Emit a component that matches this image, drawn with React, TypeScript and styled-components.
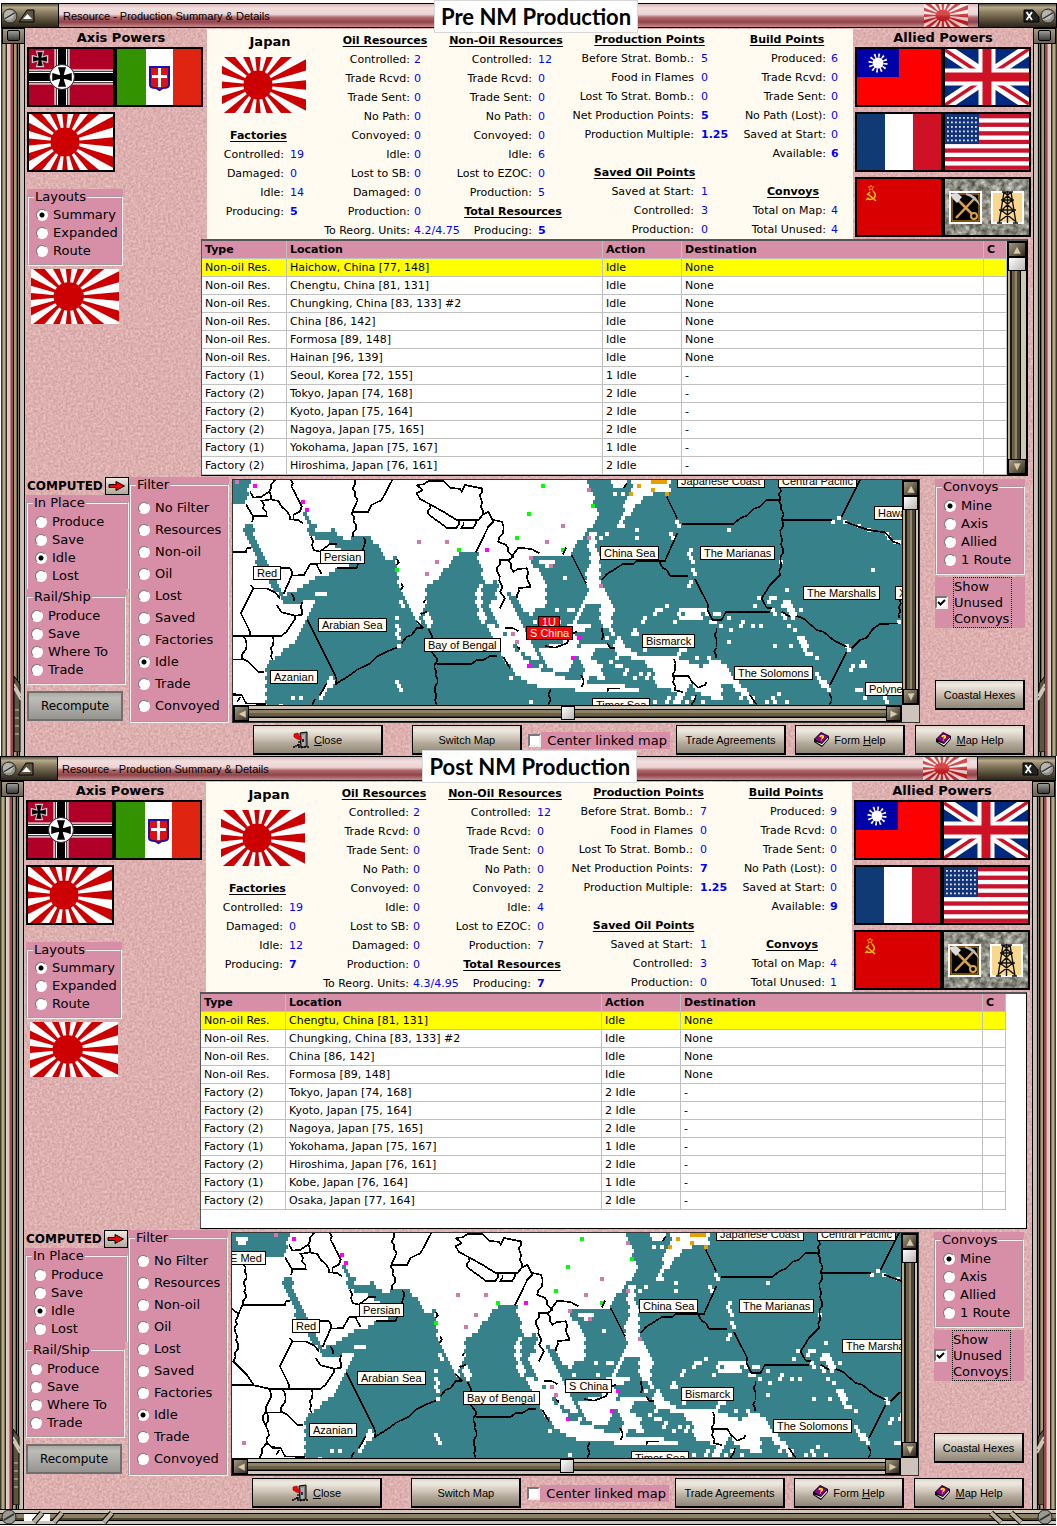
import React from "react";
import styled, { createGlobalStyle, css } from "styled-components";

const VERDANA = `Verdana, "DejaVu Sans", sans-serif`;
const ARIAL = `"Liberation Sans", Arial, sans-serif`;

const Global = createGlobalStyle`
  *, *::before, *::after { box-sizing: border-box; }
  body { margin: 0; background: #fff; color: #000; font-family: ${VERDANA}; font-size: 11px; }
`;

/* ---------- shared colours ---------- */
const ROSE = "#d78fa8";
const CREAM = "#fffbf0";
const METAL_TILE = "linear-gradient(135deg, #a59a7e, #6d6350 50%, #2f2a1f)";

/* ---------- page shell ---------- */
const Page = styled.main`
  padding-top: 3px;
`;
const Win = styled.section<{ $shift?: boolean }>`
  position: relative;
  margin: ${(p) => (p.$shift ? "0 1px 0 0" : "0 0 0 1px")};
`;
const Banner = styled.h1<{ $wide?: boolean }>`
  position: absolute;
  top: ${(p) => (p.$wide ? -6 : -3)}px;
  left: 41%;
  z-index: 3;
  margin: 0;
  padding: 0 6px;
  border: 1px solid #d8d8d8;
  background: #fff;
  font: 700 22px/31px Lato, sans-serif;
  white-space: nowrap;
  ${(p) => p.$wide && css`left: 40%;`}
`;
const TitleBar = styled.header`
  display: flex;
  align-items: stretch;
  height: 25px;
  border-top: 1px solid #000;
  border-bottom: 1px solid #000;
  background: linear-gradient(#d9b8b8, #f2dfdf 18%, #ecd3d3 45%, #b0696d 58%, #8f444a 78%, #c98a8c);
`;
const TitleText = styled.div`
  flex: 1;
  padding-left: 4px;
  font: 11px/24px ${ARIAL};
`;
const Cap = styled.div<{ $w: number; $end?: boolean }>`
  display: flex;
  align-items: center;
  gap: 0;
  justify-content: ${(p) => (p.$end ? "flex-end" : "flex-start")};
  width: ${(p) => p.$w}px;
  border: solid #000;
  border-width: 0 1px;
  background: linear-gradient(#5a523c, #b5a98a 15%, #8d8064 35%, #5f543e 65%, #2b261b);
`;
const CapButton = styled.button`
  width: 17px;
  height: 14px;
  padding: 0;
  border: 0;
  background: none;
  svg { display: block; }
`;
const TitleFlag = styled.div`
  width: 44px;
  margin-right: 10px;
  opacity: 0.65;
`;
const Frame = styled.div`
  display: flex;
`;
const Rail = styled.div<{ $right?: boolean }>`
  position: relative;
  flex: none;
  width: ${(p) => (p.$right ? 24 : 25)}px;
  background: linear-gradient(
    ${(p) => (p.$right ? "270deg" : "90deg")},
    #3a3828 0 1px, #7d7455 1px 2px, #b3a988 2px 4px, #7d7455 4px 5px, #2c281c 5px 6px,
    #d8cfc6 6px 7px, #e6c4c4 7px 9px, #c07c80 9px 10px, #93494f 10px 12px, #111 12px 13px,
    #a69b76 13px 15px, #6f6648 15px 16px, #000 16px 17px, #7d7455 17px 18px, #000 18px 19px,
    #b8afa0 19px 20px, #cbc2b5 20px 23px, #000 23px 24px, #d9b5b5 24px
  );
`;
const Clamp = styled.div<{ $right?: boolean }>`
  position: absolute;
  top: 0;
  ${(p) => (p.$right ? "left: 0;" : "right: 1px;")}
  width: 23px;
  height: 16px;
  padding: 1px 4px;
  border: 1px solid #000;
  background: linear-gradient(#a79a7c, #6d6350);
  &::before {
    content: "";
    display: block;
    width: 13px;
    height: 11px;
    border: 1px solid #000;
    border-radius: 2px;
    background: linear-gradient(#9c9c98, #3c3c3c);
  }
`;
const RailFoot = styled.svg<{ $right?: boolean }>`
  position: absolute;
  bottom: 4px;
  ${(p) => (p.$right ? "left: 4px; transform: scaleX(-1);" : "right: 4px;")}
`;
const Content = styled.div`
  position: relative;
  flex: 1;
  min-width: 0;
  padding-bottom: 1px;
  overflow: hidden;
`;
const Texture = styled.svg`
  position: absolute;
  inset: 0;
  width: 100%;
  height: 100%;
`;
const Layer = styled.div`
  position: relative;
`;
const BottomBar = styled.footer`
  display: flex;
  align-items: center;
  justify-content: space-between;
  height: 16px;
  padding-right: 1px;
  border-top: 1px solid #000;
  background: linear-gradient(#cfc6b6 0 3px, #000 3px 4px, #8d8264 4px 8px, #4b4330 8px 10px, #000 10px 11px, #cfc6b6 11px 14px, #000 14px);
`;
const Chevrons = styled.svg`
  display: block;
`;

/* ---------- upper area ---------- */
const Upper = styled.div`
  display: flex;
  height: 447px;
`;
const LeftCol = styled.aside`
  flex: none;
  width: 175px;
  padding-left: 1px;
`;
const MainCol = styled.div`
  flex: 1;
  min-width: 0;
`;
const TopRow = styled.div`
  display: flex;
  height: 211px;
  padding: 1px 0 0 6px;
`;
const PowersTitle = styled.h2`
  width: 176px;
  margin: 0;
  padding-left: 12px;
  text-align: center;
  font: bold 13px/19px ${VERDANA};
`;
const Powers = styled.div`
  flex: none;
  width: 180px;
  padding-left: 2px;
  margin-top: -1px;
  ${PowersTitle} { padding-left: 0; }
`;
const FlagGrid = styled.div`
  display: grid;
  grid-template-columns: 88px 88px;
  gap: 5px 0;
`;
const FlagButton = styled.button`
  display: block;
  width: 88px;
  height: 60px;
  padding: 0;
  border: 2px solid #000;
  background: #fff;
  svg { display: block; width: 100%; height: 100%; }
`;
const PlainFlag = styled.div<{ $w: number; $h: number }>`
  width: ${(p) => p.$w}px;
  height: ${(p) => p.$h}px;
`;
const LayoutsBox = styled.div`
  width: 96px;
  margin-top: 17px;
`;
const FlagBelow = styled.div`
  padding: 3px 0 0 4px;
`;

/* ---------- stats ---------- */
const Stats = styled.div`
  display: flex;
  flex: 1;
  min-width: 0;
  padding-top: 1px;
  background: ${CREAM};
`;
const StatCol = styled.div<{ $w: number; $low?: boolean }>`
  flex: ${(p) => p.$w} 1 0;
  min-width: 0;
  padding-top: ${(p) => (p.$low ? 1 : 0)}px;
`;
const StatHead = styled.h3<{ $l?: number; $r?: number }>`
  margin: 0;
  padding: 0 ${(p) => p.$r || 0}px 0 ${(p) => p.$l || 0}px;
  font: bold 11px/19px ${VERDANA};
  text-align: center;
  text-decoration: underline;
  text-underline-offset: 2px;
  white-space: nowrap;
`;
const StatRow = styled.div<{ $a: number; $b: number; $gap: number }>`
  display: grid;
  grid-template-columns: ${(p) => p.$a}fr ${(p) => p.$b}fr;
  column-gap: ${(p) => p.$gap}px;
  height: 19px;
  line-height: 19px;
  white-space: nowrap;
`;
const StatLabel = styled.span`
  display: flex;
  justify-content: flex-end;
  min-width: 0;
`;
const StatValue = styled.output<{ $bold?: boolean }>`
  min-width: 0;
  color: #00f;
  font-weight: ${(p) => (p.$bold ? "bold" : "normal")};
`;
const Nation = styled.div`
  height: 95px;
  padding-left: 15px;
`;
const NationName = styled.h3`
  width: 96px;
  margin: 0 0 4px;
  font: bold 13px/22px ${VERDANA};
  text-align: center;
`;

/* ---------- table ---------- */
const TablePanel = styled.div`
  display: flex;
  min-height: 237px;
  margin-right: 5px;
  border: 1px solid #555;
  border-top-width: 2px;
  border-right-color: #000;
  border-bottom-color: #000;
  background: #fff;
`;
const Grid = styled.table`
  flex: 1;
  width: 100%;
  table-layout: fixed;
  border-collapse: separate;
  border-spacing: 0;
  align-self: flex-start;
  th, td {
    height: 18px;
    padding: 1px 2px 0 3px;
    border-right: 1px solid #c0c0c0;
    border-bottom: 1px solid #c0c0c0;
    font-size: 11px;
    line-height: 16px;
    text-align: left;
    white-space: nowrap;
    overflow: hidden;
  }
  th { background: ${ROSE}; }
  tbody tr:first-child td { background: #ff0; }
`;
const Spacer = styled.div`
  width: 20px;
`;

/* ---------- scroll bars ---------- */
const VBar = styled.div<{ $w: number }>`
  display: flex;
  flex-direction: column;
  align-items: stretch;
  flex: none;
  width: ${(p) => p.$w}px;
  border: 1px solid #000;
  background: linear-gradient(90deg, #b8ae98 0 2px, #1a1810 2px 4px, #6b614a 4px 7px, #93876a 7px 9px, #4b4330 9px 12px, #000 12px 13px, #cfc6b6 13px);
`;
const HBar = styled.div`
  display: flex;
  height: 17px;
  border: 1px solid #000;
  background: linear-gradient(#cfc6b6 0 3px, #000 3px 4px, #8d8264 4px 7px, #6b5f46 7px 10px, #3a3426 10px 11px, #000 11px 12px, #cfc6b6 12px);
`;
const Arrow = styled.button`
  flex: none;
  min-width: 15px;
  height: 15px;
  padding: 0;
  border: 1px solid #000;
  background: ${METAL_TILE};
  svg { display: block; margin: auto; }
`;
const Thumb = styled.div`
  flex: none;
  min-width: 14px;
  height: 14px;
  border: 1px solid #000;
  background: linear-gradient(135deg, #fff, #b9b4ae);
`;
const Track = styled.div`
  flex: 1;
`;

/* ---------- lower area ---------- */
const Lower = styled.div`
  display: flex;
  height: 280px;
`;
const Controls = styled.div`
  display: flex;
  flex: none;
  width: 206px;
  padding-top: 2px;
`;
const Modes = styled.div`
  width: 103px;
`;
const Computed = styled.div`
  display: flex;
  align-items: center;
  justify-content: space-between;
  height: 18px;
  padding-left: 1px;
  font: bold 12px/18px ${VERDANA};
`;
const SmallButton = styled.button`
  width: 24px;
  height: 18px;
  padding: 0;
  border: 1px solid #000;
  background: linear-gradient(#ece8e2, #b0a99c);
  svg { display: block; margin: auto; }
`;
const GroupWrap = styled.div<{ $w?: string; $h?: number }>`
  width: ${(p) => p.$w || "100%"};
  height: ${(p) => (p.$h ? p.$h + "px" : "auto")};
  overflow: hidden;
  background: ${ROSE};
`;
const Fieldset = styled.fieldset<{ $pad: number; $top: number }>`
  min-width: 0;
  margin: 0;
  padding: ${(p) => p.$top}px 0 4px ${(p) => p.$pad}px;
  border: 2px groove #f4f0f2;
  legend {
    margin-left: ${(p) => -p.$pad + 5}px;
    padding: 0 1px;
    font-size: 13px;
    line-height: 16px;
  }
`;
const RadioRow = styled.label<{ $h: number }>`
  display: flex;
  align-items: center;
  gap: 5px;
  height: ${(p) => p.$h}px;
  font-size: 13px;
  line-height: 16px;
  white-space: nowrap;
`;
const Radio = styled.input`
  appearance: none;
  flex: none;
  width: 12px;
  height: 12px;
  margin: 0;
  border: 1px solid;
  border-color: #777 #fff #fff #777;
  border-radius: 50%;
  background: #fff;
  &:checked { background: radial-gradient(circle, #000 0 2px, #fff 3px); }
`;
const Check = styled.input`
  appearance: none;
  flex: none;
  width: 13px;
  height: 13px;
  margin: 0;
  border: 2px solid;
  border-color: #777 #eee #eee #777;
  background: #fff;
`;
const CheckBox = styled.span`
  position: relative;
  display: flex;
  svg { position: absolute; inset: 2px; pointer-events: none; opacity: 0; }
  ${Check}:checked + svg { opacity: 1; }
`;
const PushButton = styled.button<{ $w?: number; $gray?: boolean }>`
  display: flex;
  align-items: center;
  justify-content: center;
  gap: 4px;
  width: ${(p) => (p.$w ? p.$w + "px" : "100%")};
  height: 30px;
  padding: 0;
  border: 1px solid #000;
  border-right-width: 2px;
  border-bottom-width: 2px;
  background: linear-gradient(#ddd6cb, #efe9df 15%, #cfc6b9 45%, #b3a999 65%, #8f8778);
  color: #000;
  font: 11px/14px ${ARIAL};
  white-space: nowrap;
  ${(p) =>
    p.$gray &&
    css`
      border: 2px solid #6f6f6f;
      background: linear-gradient(#aaa89f, #bdbdb8 20%, #a9a8a4 60%, #96948f);
      font: 12px/14px ${VERDANA};
    `}
`;
const RecomputeSlot = styled.div`
  padding: 6px 0 0 1px;
`;
const Right = styled.div`
  flex: 1;
  min-width: 0;
  padding-top: 4px;
`;
const MapRow = styled.div`
  display: flex;
`;
const MapPanel = styled.div`
  flex: 1;
  min-width: 0;
  border: 1px solid #333;
`;
const MapTop = styled.div`
  display: flex;
`;
const MapView = styled.div`
  position: relative;
  flex: 1;
  min-width: 0;
  height: 225px;
  overflow: hidden;
  background: #fff;
  > svg { display: block; width: 100%; height: 225px; }
`;
const MapLabel = styled.span<{ $hot?: boolean }>`
  position: absolute;
  height: 14px;
  padding: 0 3px;
  border: 1px solid #000;
  background: ${(p) => (p.$hot ? "#f00" : CREAM)};
  color: ${(p) => (p.$hot ? "#fff" : "#000")};
  font: 11px/12px ${ARIAL};
  white-space: nowrap;
`;
const MapFoot = styled.div`
  display: flex;
`;
const HBarWrap = styled.div`
  flex: 1;
`;
const Corner = styled.div`
  width: 17px;
  background: #cdc3bb;
`;
const Side = styled.div`
  flex: none;
  width: 113px;
  padding: 0 8px 0 15px;
`;
const ShowUnused = styled.label`
  display: flex;
  align-items: center;
  gap: 5px;
  margin: 2px 0 52px;
  background: ${ROSE};
  font-size: 13px;
  line-height: 16px;
  > span:last-child { width: 59px; height: 51px; padding-top: 1px; border: 1px dotted #000; }
`;
const ButtonRow = styled.div`
  display: flex;
  align-items: center;
  padding: 2px 8px 0 21px;
`;
const ButtonGroup = styled.div<{ $gap: number }>`
  display: flex;
  align-items: center;
  gap: ${(p) => p.$gap}px;
  margin-left: auto;
  & + & { margin-left: 9px; }
`;
const LinkCheck = styled.label`
  display: flex;
  align-items: center;
  font-size: 13px;
  line-height: 17px;
  white-space: nowrap;
  > span:last-child { padding: 0 3px 0 6px; background: ${ROSE}; }
`;

/* ---------- flags ---------- */
const RisingSun = () => {
  const rays = Array.from({ length: 16 }, (_, i) => {
    const a = ((i * 22.5 - 5.6) * Math.PI) / 180;
    const b = ((i * 22.5 + 5.6) * Math.PI) / 180;
    return `M36 28L${36 + 90 * Math.cos(a)} ${28 + 90 * Math.sin(a)}L${36 + 90 * Math.cos(b)} ${28 + 90 * Math.sin(b)}z`;
  }).join("");
  return (
    <svg viewBox="0 0 84 56" width="100%" height="100%" preserveAspectRatio="none" style={{ display: "block" }}>
      <rect width="84" height="56" fill="#fff" />
      <path d={rays} fill="#c00" />
      <circle cx="36" cy="28" r="14.500" fill="#c00" />
    </svg>
  );
};
const CROSS = "M-3-9H3Q1-3 1-1Q3-1 9-3V3Q3 1 1 1Q1 3 3 9H-3Q-1 3-1 1Q-3 1-9 3V-3Q-3-1-1-1Q-1-3-3-9z";
const Germany = () => (
  <svg viewBox="0 0 84 56" preserveAspectRatio="none">
    <rect width="84" height="56" fill="#b00028" />
    <path d="M33 0V56M0 28H84" stroke="#fff" strokeWidth="15" />
    <path d="M33 0V56M0 28H84" stroke="#000" strokeWidth="12.5" />
    <path d="M33 0V56M0 28H84" stroke="#fff" strokeWidth="10.5" />
    <path d="M33 0V56M0 28H84" stroke="#000" strokeWidth="8" />
    <circle cx="33" cy="28" r="12.5" fill="#fff" stroke="#222" />
    <path d={CROSS} transform="translate(33 28)" fill="#000" stroke="#000" strokeWidth="1.500" />
    <path d={CROSS} transform="translate(11 10) scale(.75)" fill="#000" stroke="#ccc" strokeWidth="4" />
    <path d={CROSS} transform="translate(11 10) scale(.7)" fill="#000" stroke="#000" strokeWidth="1.500" />
  </svg>
);
const Italy = () => (
  <svg viewBox="0 0 84 56" preserveAspectRatio="none">
    <rect width="84" height="56" fill="#fff" />
    <rect width="29" height="56" fill="#339200" />
    <rect x="56" width="28" height="56" fill="#df2512" />
    <path d="M33 18H52V36Q52 39 46 39L42.500 41L39 39Q33 39 33 36z" fill="#d11" stroke="#1a10b0" strokeWidth="2" />
    <path d="M42.500 19V38M35 27.500H50" stroke="#fff" strokeWidth="3" />
  </svg>
);
const China = () => (
  <svg viewBox="0 0 84 56" preserveAspectRatio="none">
    <rect width="84" height="56" fill="#f00" />
    <rect width="42" height="28" fill="#0000a8" />
    <circle cx="21" cy="14" r="7.500" fill="none" stroke="#fff" strokeWidth="4" strokeDasharray="1.600 2.330" />
    <circle cx="21" cy="14" r="5.500" fill="#fff" />
  </svg>
);
const Britain = () => (
  <svg viewBox="0 0 84 56" preserveAspectRatio="none">
    <rect width="84" height="56" fill="#002a80" />
    <path d="M0 0L84 56M84 0L0 56" stroke="#fff" strokeWidth="12" />
    <path d="M0 1L42 29M84 0L42 28M42 28L84 55M42 28L0 56" stroke="#cf1126" strokeWidth="3.500" />
    <path d="M42 0V56M0 28H84" stroke="#fff" strokeWidth="17" />
    <path d="M42 0V56M0 28H84" stroke="#cf1126" strokeWidth="9" />
  </svg>
);
const France = () => (
  <svg viewBox="0 0 84 56" preserveAspectRatio="none">
    <rect width="84" height="56" fill="#fff" />
    <rect width="28" height="56" fill="#0f3a73" />
    <rect x="56" width="28" height="56" fill="#cf1126" />
  </svg>
);
const USA = () => (
  <svg viewBox="0 0 84 56" preserveAspectRatio="none">
    <rect width="84" height="56" fill="#fff" />
    {Array.from({ length: 7 }, (_, i) => (
      <rect key={i} y={i * 8.6} width="84" height="4.300" fill="#c8142e" />
    ))}
    <rect width="34" height="30" fill="#14347a" />
    {Array.from({ length: 48 }, (_, i) => (
      <rect key={i} x={2 + (i % 8) * 4} y={3 + Math.floor(i / 8) * 4.5} width="1.800" height="1.800" fill="#dfe6f5" />
    ))}
  </svg>
);
const Soviet = () => (
  <svg viewBox="0 0 84 56" preserveAspectRatio="none">
    <rect width="84" height="56" fill="#d80000" />
    <path d="M14 6l.8 2h2l-1.600 1.300.6 2-1.800-1.200-1.800 1.200.6-2L11.200 8h2z" fill="none" stroke="#f7a500" strokeWidth=".8" />
    <path d="M16 12Q20 16 17 19Q13 22 10 19M9 21L12 19M11 15L19 22M10 16L13 13" fill="none" stroke="#fc0" strokeWidth="1.400" />
  </svg>
);
const Resources = ({ uid }: { uid: string }) => (
  <svg viewBox="0 0 84 56" preserveAspectRatio="none">
    <filter id={`stone-${uid}`} x="0" y="0" width="100%" height="100%" colorInterpolationFilters="sRGB">
      <feTurbulence type="fractalNoise" baseFrequency=".16" numOctaves="3" />
      <feColorMatrix values=".9 0 0 0 .1  .9 0 0 0 .1  .9 0 0 0 .06  0 0 0 0 1" />
    </filter>
    <rect width="84" height="56" filter={`url(#stone-${uid})`} />
    <rect x="5" y="13" width="31" height="31" fill="#000" stroke="#fff" strokeWidth="2" />
    <rect x="7" y="15" width="27" height="27" fill="none" stroke="#f0a010" />
    <path d="M11 39L30 19M12 20L27 35" stroke="#d9a050" strokeWidth="2.500" />
    <path d="M5 15L12 14L17 18L12 24L8 20z" fill="#ddd" />
    <path d="M21 14Q32 15 35 27Q29 19 21 16z" fill="#bbb" />
    <circle cx="29" cy="37" r="3" fill="none" stroke="#d9a050" strokeWidth="2" />
    <rect x="47" y="13" width="31" height="31" fill="#f9d88e" stroke="#fff" strokeWidth="2" />
    <path d="M59 13L54 44M66 13L71 44M57 13H68M56 21H69M54 31H71M58 21L68 31M67 21L57 31M56 31L70 42M69 31L55 42M59 13L67 21M66 13L58 21M62.500 12V44M52 44H57M68 44H73" stroke="#111" strokeWidth="1.400" fill="none" />
  </svg>
);

/* ---------- small icons ---------- */
const Tri = ({ dir }: { dir: "up" | "down" | "left" | "right" }) => {
  const d = { up: "M5 1L9 9H1z", down: "M5 9L1 1H9z", left: "M1 5L9 1V9z", right: "M9 5L1 9V1z" }[dir];
  return (
    <svg width="10" height="10" viewBox="0 0 10 10">
      <path d={d} fill="#d8ccb0" stroke="#6a6048" strokeWidth=".6" />
    </svg>
  );
};
const Screw = () => (
  <svg width="16" height="16" viewBox="0 0 16 16" style={{ display: "block", flex: "none" }}>
    <circle cx="8" cy="8" r="7" fill="#8e8e86" stroke="#26251f" />
    <circle cx="7" cy="7" r="5" fill="#b5b5ae" />
    <path d="M3 11L13 5" stroke="#333" strokeWidth="2" />
    <path d="M3 12L13 6" stroke="#e5e5e0" strokeWidth=".8" />
  </svg>
);
const DoorIcon = () => (
  <svg width="17" height="18" viewBox="0 0 17 18">
    <path d="M7 2L14 1V15L8 17z" fill="#7b7f84" stroke="#000" />
    <path d="M9 4L12 3V14L9 16z" fill="#a9aeb3" />
    <path d="M10 8V11" stroke="#000" strokeWidth="1.500" />
    <path d="M1 3L5 2L6 5L8 6V9L4 8L1 6z" fill="#f00" stroke="#700" strokeWidth=".6" />
    <path d="M0 16H3V14H5V16H16M6 10V15" stroke="#000" strokeWidth="1.300" strokeDasharray="2 1" fill="none" />
  </svg>
);
const BookIcon = () => (
  <svg width="17" height="17" viewBox="0 0 17 17">
    <path d="M1 11L9 16L16 8V5L8 1L1 8z" fill="#000" />
    <path d="M2 10.500L9 14.500L15 8V6.500L9 13z" fill="#fff" />
    <path d="M2 8L8 2L15 5.500L9 12z" fill="#900090" />
    <path d="M7 6Q8 4 10 5Q11 6.500 8.500 7.500M8 9L8.600 9.300" stroke="#ff0" strokeWidth="1.500" fill="none" />
  </svg>
);
const RedArrow = () => (
  <svg width="18" height="12" viewBox="0 0 18 12">
    <path d="M1 4.500H8V1.500L16.500 6L8 10.500V7.500H1z" fill="#f00" stroke="#000" />
  </svg>
);

/* ---------- map ---------- */
type P = [number, number];
const pts = (s: string): P[] => s.trim().split(/\s+/).map((v) => v.split(",").map(Number) as P);
const east = (s: string) => pts(s).map(([x, y]) => [x + 1020, y] as P);

const SEA: P[][] = [
  pts(`150,365 190,352 230,330 250,312 290,300 320,282 400,262 320,215 300,200 262,195 240,180 228,140 218,108 236,118 242,145 258,150 262,170 290,172 305,158 322,178 350,196 375,183 420,183 440,207 455,236 470,252 498,248 500,300 512,345 525,375 545,410 566,445 575,415 588,375 590,335 612,318 640,292 665,250 690,236 740,230 755,285 768,325 802,316 800,370 778,380 782,410 800,440 830,480 870,530 925,565 925,530 900,500 885,455 860,420 838,385 832,350 862,365 878,400 905,420 922,400 945,395 950,320 925,290 900,250 940,243 1015,245 1030,215 1065,180 1088,150 1106,120 1098,90 1083,50 1070,10 2030,10 2030,700 105,700 106,640 106,575 140,545 180,512 215,470 225,430 245,400 256,372 200,385 160,385`),
  pts("40,147 70,147 76,190 95,230 112,265 130,300 142,335 156,350 150,365 122,335 105,295 85,280 76,240 60,215 46,180"),
  pts("-120,10 64,10 55,45 48,85 40,98 -120,98"),
];
const LAND: P[][] = [
  pts("-120,88 60,88 60,100 -120,100"),
  pts("-95,27 -60,27 -65,50 -95,50"),
  pts("772,445 800,455 830,485 862,528 900,570 950,590 1000,608 1060,622 1220,636 1220,655 1110,655 1000,640 930,634 880,618 850,590 825,555 800,500"),
  pts("745,325 757,327 752,400 770,440 788,462 775,465 745,420 738,365"),
  pts("590,405 600,420 605,450 590,460 580,440"),
  pts("250,350 290,350 290,362 250,362"),
  pts("920,520 955,515 1000,500 1030,480 1045,500 1040,540 1025,578 985,590 945,570"),
  pts("930,258 975,258 970,280 930,270"),
  east("68,225 88,240 92,300 84,335 108,345 118,375 132,400 125,450 108,460 92,440 90,385 60,380 46,395 28,425 26,450 65,450 68,462 20,470 0,500 -20,470 8,440 38,375 52,350 50,300"),
  east("60,175 80,175 78,195 75,228 60,225 50,195"),
  east("188,10 302,10 300,45 272,50 220,68 195,98 168,130 158,158 142,152 160,110 170,75 185,50"),
  east("120,15 170,15 170,40 140,40"),
  east("130,500 160,500 170,520 200,540 250,540 310,545 355,560 395,578 440,550 475,575 490,615 535,645 560,690 540,690 505,640 470,620 445,640 455,670 400,668 365,630 330,660 290,640 260,640 250,590 225,560 170,545 130,535"),
  east("40,510 120,505 120,520 70,525 60,550 95,570 105,610 85,620 60,590 50,640 30,640 40,580 20,545"),
  east("345,405 380,400 400,405 395,430 345,430"),
  east("320,655 345,655 335,690 310,690"),
  east("640,370 660,370 680,420 660,430"),
  east("685,485 705,500 725,550 705,545"),
  east("870,560 888,560 895,585 862,585"),
  east("740,595 785,640 775,655 735,610"),
  pts("490,620 505,615 520,640 510,650"),
  pts("270,650 300,605 320,620 280,660"),
];
const SPECKS: P[] = [
  ...pts("515,380 518,395 500,430 497,455 505,468 505,480 505,492 507,510 189,669 213,669 267,667 150,689 843,609 903,681 789,405 1005,309 1017,405 975,402 981,435 933,573 969,597 1011,585 915,440 940,390"),
  ...east(`321,140 325,155 303,178 309,190 201,165 201,188 477,165 135,57 155,57 290,57 355,235 363,225 358,248 368,260 363,285 370,298 362,315 357,330 633,260 909,285 107,177 95,190
    789,141 807,129 825,141 866,153 897,165 951,177 957,189 975,201 990,201 603,371 595,383 615,371 645,345 567,369 555,393 570,369 650,375 610,405 620,413 635,413 650,425 668,430 688,410 640,395 655,453 675,465 445,417 440,417 435,440 452,453 428,440
    285,393 262,405 255,417 225,429 219,441 273,405 291,393 315,441 333,423 345,423 333,405 321,411 390,405 405,405 372,425 405,420 477,429 483,465 519,441 513,453 543,453 573,453 477,501 615,513 663,513 741,549 693,489 699,501 705,513 717,537
    195,465 189,477 183,477 201,477 123,465 129,477 105,490 147,490 135,525 225,525 381,549 333,525 327,540 345,525 5,405 45,575 85,575 155,575 165,590 210,600 225,610 240,600 170,600 190,610 135,545 120,560 140,570 155,650 170,640 200,640 50,615 75,640
    415,548 410,575 420,600 455,645 500,600 505,625 430,640 495,650 515,665 545,670 585,681 627,657 615,675 651,675 609,669 370,670 400,680 345,680 300,670 285,680 250,675 849,573 843,585 837,520 831,513 861,645 873,645 945,681 950,669 735,600 760,625 879,669 987,441`),
];
const DOTS: [string, P[]][] = [
  ["#f0f", pts("75,33 219,81 231,105 771,225 1047,489 1030,549 897,573")],
  ["#cf7aae", pts("21,21 567,201 651,201 621,261 591,297 951,201 999,153 903,249 963,273 849,477 861,501 1077,45 1077,189 1113,333 -75,645")],
  ["#0f0", pts("939,33 897,117 861,189 687,225 501,285 999,225 1089,93")],
  ["#e8a000", east("207,33 243,21 255,21 285,21 249,45 183,57 291,57 267,21")],
];
const BORDERS: P[][] = [
  ...[
    "-112,242 -95,255 -102,310 -92,350 -107,400 -67,440 -45,472 0,482 60,482",
    "-75,110 -68,140 -74,170 -70,200 -79,230 48,230 50,220 62,218",
    "-79,230 -95,265", "-112,470 -47,470",
    "0,482 5,510 -10,540 -18,575 -2,610 -6,645 12,660 35,662", "-10,553 40,553 -6,553 -2,570 -10,590", "-6,645 -20,660 -28,689",
    "60,50 70,68 95,65 118,50 122,30 135,15",
    "118,50 122,73 95,78 110,122 68,122 48,88", "68,122 65,142",
    "122,73 145,78 155,95 172,110 180,133 205,135 218,145",
    "183,15 190,45 215,95 210,110 190,120 190,133",
    "375,15 368,40 383,75 365,115 378,150 370,185", "365,110 415,110 425,90 455,75 487,15",
    "243,185 252,225 270,230 300,207 320,207",
    "150,278 180,280 185,302 222,300 240,268 275,265", "260,270 275,298", "185,302 160,358",
    "62,330 70,340 110,340 135,352 150,370", "70,340 33,415 60,470 60,482 155,482 170,470 195,432 195,422 155,412 140,390",
    "195,422 215,420 212,395 218,380", "40,482 50,510 35,550 55,560 85,590 103,590", "8,482 60,482", "8,553 40,553",
    "125,482 130,500 122,520 128,555", "8,657 35,660 48,685 108,687", "32,665 22,680",
    "232,433 315,600 318,627 360,600 380,585 420,565 440,545 470,530 500,518",
    "515,505 530,485 545,480 560,460 578,458 560,438",
    "595,462 605,480 605,530 620,550 614,580 622,610 615,650 620,689", "620,567 725,567 740,555 760,555 780,543 800,543",
    "290,625 270,660", "255,672 246,689", "400,187 405,205 380,278 320,278", "183,355 193,377",
    "560,30 580,28 595,18 640,18 660,38 690,42 695,50 705,30 755,40 752,70 758,120 745,135 680,135 640,110 600,88 570,72 560,55 578,45 560,30",
    "600,88 595,118 650,158 680,158 688,135", "700,140 695,158 730,158 738,135",
    "758,120 775,110 790,140 775,155 738,232", "790,135 815,140 820,165 805,200 828,210 835,230 850,245 835,255 810,255 802,290 815,330 810,350 825,370 810,400",
    "845,245 865,218 905,222 928,235", "835,255 850,290 865,282 890,280 895,320 902,335 865,340 862,370",
    "998,238 1008,218", "1025,240 1068,325", "825,458 850,460 865,468", "945,513 975,518 1010,505 1020,480 1040,470", "862,515 870,522",
    "962,643 955,660 962,672 955,689", "500,252 506,262 500,270", "513,325 518,335 512,345", "585,375 580,385", "572,418 590,410", "820,545 840,580",
  ].map(pts),
  ...[
    "95,315 110,298 130,285 145,275 160,267 190,267 200,257 285,257 322,175", "265,257 280,280 290,285 300,302 355,302",
    "290,65 322,130", "335,147 490,147 510,130 530,122 550,102 570,95 590,75 630,75",
    "630,38 628,80 638,110 638,140 632,180 638,220 632,260 630,300 610,320 600,330 575,370 590,398 605,400",
    "638,135 785,135", "815,125 870,15", "825,140 860,153 895,165 945,172 970,200 990,207",
    "375,312 415,390 412,405 428,435 455,435 468,410 600,410", "635,410 660,425",
    "680,423 700,430 740,465 760,470 790,495 830,515", "845,520 870,495 890,488 910,460 930,447 985,445", "990,375 988,430",
    "830,530 780,630", "778,655 785,670 778,689", "440,460 433,480 440,505 433,530 438,550", "95,458 98,475 95,495", "112,505 120,518 135,520",
    "312,552 315,575 308,600 315,645 340,652", "312,602 355,602 365,620 385,638 405,630 410,620", "378,660 365,689",
    "33,600 40,615 35,635", "112,650 115,640 150,640", "160,40 170,25", "560,689 540,660",
  ].map(east),
];

const inside = (poly: P[], x: number, y: number) => {
  let hit = false;
  for (let i = 0, j = poly.length - 1; i < poly.length; j = i++) {
    const [xi, yi] = poly[i];
    const [xj, yj] = poly[j];
    if (yi > y !== yj > y && x < ((xj - xi) * (y - yi)) / (yj - yi) + xi) hit = !hit;
  }
  return hit;
};
// Every map cell is a 12-unit square; odd rows are pushed half a cell, as on a hex board.
const rowShift = (k: number) => (k % 2 ? 9 : 3);
const cellAt = ([x, y]: P) => {
  const k = Math.floor((y - 15) / 12);
  const s = rowShift(k);
  return `M${Math.floor((x - s) / 12) * 12 + s} ${15 + 12 * k}h12v12h-12z`;
};
const seaPath = (() => {
  let d = "";
  for (let k = 0; k < 57; k++) {
    const y = 15 + 12 * k;
    let start: number | null = null;
    for (let x = rowShift(k) - 132; x < 2050; x += 12) {
      const cx = x + 6;
      const cy = y + 6;
      const sea = SEA.some((p) => inside(p, cx, cy)) && !LAND.some((p) => inside(p, cx, cy));
      if (sea && start === null) start = x;
      if (start !== null && (!sea || x + 12 >= 2050)) {
        d += `M${start} ${y}H${x}v12H${start}z`;
        start = null;
      }
    }
  }
  return d;
})();
const speckPath = SPECKS.map(cellAt).join("");

// Borders wobble from cell to cell: each segment is walked one map row at a time.
const stepped = (line: P[]) => {
  let d = `M${line[0].join(" ")}`;
  for (let i = 1; i < line.length; i++) {
    const [x0, y0] = line[i - 1];
    const [x1, y1] = line[i];
    const n = Math.max(1, Math.round(Math.abs(y1 - y0) / 12));
    const steep = Math.abs(y1 - y0) > 2 * Math.abs(x1 - x0) && Math.abs(x1 - x0) < 16;
    for (let k = 1; k <= n; k++) {
      const wob = steep && k < n ? (k % 2 ? 3 : -3) : 0;
      d += `L${x0 + ((x1 - x0) * k) / n + wob} ${y0 + ((y1 - y0) * k) / n}`;
    }
  }
  return d;
};
const borderPath = BORDERS.map(stepped).join("");

type Lab = { t: string; x: number; y: number };
const LABELS: Lab[] = [
  { t: "E Med", x: -128, y: 69 }, { t: "Persian", x: 271, y: 225 }, { t: "Red", x: 69, y: 273 },
  { t: "Arabian Sea", x: 265, y: 429 }, { t: "Azanian", x: 121, y: 585 }, { t: "Bay of Bengal", x: 583, y: 489 },
  { t: "S China", x: 889, y: 453 }, { t: "Bismarck", x: 1237, y: 477 }, { t: "China Sea", x: 1110, y: 213 },
  { t: "The Marianas", x: 1410, y: 213 }, { t: "Japanese Coast", x: 1341, y: -3 }, { t: "Central Pacific", x: 1645, y: -3 },
  { t: "Hawaiian", x: 1932, y: 93 }, { t: "The Marshalls", x: 1719, y: 333 }, { t: "X", x: 1995, y: 333 },
  { t: "The Solomons", x: 1512, y: 573 }, { t: "Polynesian", x: 1905, y: 621 }, { t: "Timor Sea", x: 1087, y: 669 },
];

const WorldMap = ({ originX, alert }: { originX: number; alert?: boolean }) => (
  <MapView>
    <svg viewBox={`${originX} 15 2007 675`} preserveAspectRatio="xMinYMin slice" shapeRendering="crispEdges">
      <path d={seaPath} fill="#37828a" />
      <path d={speckPath} fill="#fff" />
      {DOTS.map(([c, list]) => (
        <path key={c} d={list.map(cellAt).join("")} fill={c} />
      ))}
      <path d={borderPath} fill="none" stroke="#000" strokeWidth="5" />
    </svg>
    {LABELS.filter((l) => l.x > originX - 60 && l.x < originX + 2000).map((l) => (
      <MapLabel key={l.t} $hot={alert && l.t === "S China"} style={{ left: Math.round((l.x - originX) / 3), top: Math.round((l.y - 15) / 3) }}>
        {l.t}
      </MapLabel>
    ))}
    {alert && (
      <MapLabel $hot style={{ left: Math.round((925 - originX) / 3), top: 136, height: 11, lineHeight: "10px" }}>
        1U
      </MapLabel>
    )}
  </MapView>
);

/* ---------- composed parts ---------- */
type GroupProps = { name: string; title: string; items: string[]; value?: string; row?: number; pad?: number; top?: number };
const RadioGroup = ({ name, title, items, value, row = 18, pad = 7, top = 1 }: GroupProps) => (
  <Fieldset $pad={pad} $top={top}>
    <legend>{title}</legend>
    {items.map((it) => (
      <RadioRow key={it} $h={row}>
        <Radio type="radio" name={name} defaultChecked={it === value} />
        {it}
      </RadioRow>
    ))}
  </Fieldset>
);

type Stat = [string, string, boolean?];
const StatLines = ({ a, b, gap, rows }: { a: number; b: number; gap: number; rows: Stat[] }) => (
  <>
    {rows.map(([l, v, bold]) => (
      <StatRow key={l} $a={a} $b={b} $gap={gap}>
        <StatLabel>{l}</StatLabel>
        <StatValue $bold={bold}>{v}</StatValue>
      </StatRow>
    ))}
  </>
);
const Gap = styled.div`
  height: 19px;
`;

type Data = {
  id: string;
  banner: string;
  factories: Stat[];
  oil: Stat[];
  nonOil: Stat[];
  total: string;
  points: Stat[];
  saved: Stat[];
  build: Stat[];
  convoys: Stat[];
  rows: string[][];
  originX: number;
  last?: boolean;
};

const Screen = ({ d }: { d: Data }) => (
  <Win $shift={d.last}>
    <Banner $wide={d.last}>{d.banner}</Banner>
    <TitleBar>
      <Cap $w={58}>
        <Screw />
        <CapButton aria-label="Roll up">
          <svg width="17" height="14" viewBox="0 0 17 14">
            <path d="M1 13L9 1H16V13z" fill="#5c5340" stroke="#000" />
            <path d="M5 10L9.500 5L14 10z" fill="#fff" />
          </svg>
        </CapButton>
      </Cap>
      <TitleText>Resource - Production Summary &amp; Details</TitleText>
      <TitleFlag>
        <RisingSun />
      </TitleFlag>
      <Cap $w={79} $end>
        <CapButton aria-label="Close window">
          <svg width="17" height="14" viewBox="0 0 17 14">
            <path d="M1 1H10L16 8V13H1z" fill="#222" stroke="#000" />
            <path d="M3.500 3L9 11M9 3L3.500 11" stroke="#fff" strokeWidth="1.800" />
          </svg>
        </CapButton>
        <Screw />
      </Cap>
    </TitleBar>
    <Frame>
      <Rail>
        <Clamp />
        <RailFoot width="8" height="76" viewBox="0 0 8 76">
          <path d="M0 0L6 8V76H0z" fill="#5d5440" stroke="#000" />
          <path d="M0 8L7 20M0 12L7 24" stroke="#cfc6b6" strokeWidth="2" />
          <path d="M1 34H5M1 42H5M1 50H5M1 58H5" stroke="#cfc6b6" />
        </RailFoot>
      </Rail>
      <Content>
        <Texture aria-hidden="true">
          <filter id={`grain-${d.id}`} x="0" y="0" width="100%" height="100%" colorInterpolationFilters="sRGB">
            <feTurbulence type="fractalNoise" baseFrequency=".4" numOctaves="2" seed="4" />
            <feColorMatrix values=".16 0 0 0 .79  .26 0 0 0 .56  .26 0 0 0 .56  0 0 0 0 1" />
          </filter>
          <rect width="100%" height="100%" filter={`url(#grain-${d.id})`} />
        </Texture>
        <Layer>
          <Upper>
            <LeftCol>
              <PowersTitle>Axis Powers</PowersTitle>
              <FlagGrid>
                <FlagButton aria-label="Germany"><Germany /></FlagButton>
                <FlagButton aria-label="Italy"><Italy /></FlagButton>
                <FlagButton aria-label="Japan"><RisingSun /></FlagButton>
              </FlagGrid>
              <LayoutsBox>
                <GroupWrap>
                  <RadioGroup name={`${d.id}-layout`} title="Layouts" items={["Summary", "Expanded", "Route"]} value="Summary" />
                </GroupWrap>
              </LayoutsBox>
              <FlagBelow>
                <PlainFlag $w={88} $h={55}><RisingSun /></PlainFlag>
              </FlagBelow>
            </LeftCol>
            <MainCol>
              <TopRow>
                <Stats>
                  <StatCol $w={103} $low>
                    <Nation>
                      <NationName>Japan</NationName>
                      <PlainFlag $w={84} $h={56}><RisingSun /></PlainFlag>
                    </Nation>
                    <StatHead>Factories</StatHead>
                    <StatLines a={77} b={20} gap={6} rows={d.factories} />
                  </StatCol>
                  <StatCol $w={136} $low>
                    <StatHead $l={14}>Oil Resources</StatHead>
                    <StatLines a={100} b={32} gap={4} rows={d.oil} />
                  </StatCol>
                  <StatCol $w={120} $low>
                    <StatHead>Non-Oil Resources</StatHead>
                    <StatLines a={86} b={28} gap={6} rows={d.nonOil} />
                    <StatHead $l={14}>Total Resources</StatHead>
                    <StatLines a={86} b={28} gap={6} rows={[["Producing:", d.total, true]]} />
                  </StatCol>
                  <StatCol $w={167}>
                    <StatHead>Production Points</StatHead>
                    <StatLines a={128} b={32} gap={7} rows={d.points} />
                    <Gap />
                    <StatHead $r={10}>Saved Oil Points</StatHead>
                    <StatLines a={128} b={32} gap={7} rows={d.saved} />
                  </StatCol>
                  <StatCol $w={120}>
                    <StatHead $r={12}>Build Points</StatHead>
                    <StatLines a={93} b={22} gap={5} rows={d.build} />
                    <Gap />
                    <StatHead>Convoys</StatHead>
                    <StatLines a={93} b={22} gap={5} rows={d.convoys} />
                  </StatCol>
                </Stats>
                <Powers>
                  <PowersTitle>Allied Powers</PowersTitle>
                  <FlagGrid>
                    <FlagButton aria-label="China"><China /></FlagButton>
                    <FlagButton aria-label="Britain"><Britain /></FlagButton>
                    <FlagButton aria-label="France"><France /></FlagButton>
                    <FlagButton aria-label="United States"><USA /></FlagButton>
                    <FlagButton aria-label="Soviet Union"><Soviet /></FlagButton>
                    <FlagButton aria-label="Resources"><Resources uid={d.id} /></FlagButton>
                  </FlagGrid>
                </Powers>
              </TopRow>
              <TablePanel>
                <Grid>
                  <colgroup>
                    <col style={{ width: 85 }} />
                    <col />
                    <col style={{ width: 79 }} />
                    <col style={{ width: 302 }} />
                    <col style={{ width: 23 }} />
                  </colgroup>
                  <thead>
                    <tr>{["Type", "Location", "Action", "Destination", "C"].map((h) => <th key={h}>{h}</th>)}</tr>
                  </thead>
                  <tbody>
                    {d.rows.map((r) => (
                      <tr key={r[1]}>
                        {r.map((c, i) => <td key={i}>{c}</td>)}
                        <td />
                      </tr>
                    ))}
                  </tbody>
                </Grid>
                {d.last ? (
                  <Spacer />
                ) : (
                  <VBar $w={20}>
                    <Arrow aria-label="Scroll list up"><Tri dir="up" /></Arrow>
                    <Thumb />
                    <Track />
                    <Arrow aria-label="Scroll list down"><Tri dir="down" /></Arrow>
                  </VBar>
                )}
              </TablePanel>
            </MainCol>
          </Upper>
          <Lower>
            <Controls>
              <Modes>
                <Computed>
                  COMPUTED
                  <SmallButton aria-label="Next computation"><RedArrow /></SmallButton>
                </Computed>
                <GroupWrap $h={94}>
                  <RadioGroup name={`${d.id}-place`} title="In Place" items={["Produce", "Save", "Idle", "Lost"]} value="Idle" top={2} />
                </GroupWrap>
                <GroupWrap $w="100px">
                  <RadioGroup name={`${d.id}-rail`} title="Rail/Ship" items={["Produce", "Save", "Where To", "Trade"]} pad={3} top={2} />
                </GroupWrap>
                <RecomputeSlot>
                  <PushButton $w={96} $gray>Recompute</PushButton>
                </RecomputeSlot>
              </Modes>
              <div>
                <GroupWrap $w="100px">
                  <RadioGroup
                    name={`${d.id}-filter`}
                    title="Filter"
                    items={["No Filter", "Resources", "Non-oil", "Oil", "Lost", "Saved", "Factories", "Idle", "Trade", "Convoyed"]}
                    value="Idle"
                    row={22}
                    top={4}
                  />
                </GroupWrap>
              </div>
            </Controls>
            <Right>
              <MapRow>
                <MapPanel>
                  <MapTop>
                    <WorldMap originX={d.originX} alert={!d.last} />
                    <VBar $w={17}>
                      <Arrow aria-label="Scroll map up"><Tri dir="up" /></Arrow>
                      <Thumb />
                      <Track />
                      <Arrow aria-label="Scroll map down"><Tri dir="down" /></Arrow>
                    </VBar>
                  </MapTop>
                  <MapFoot>
                    <HBarWrap>
                      <HBar>
                        <Arrow aria-label="Scroll map left"><Tri dir="left" /></Arrow>
                        <Track />
                        <Thumb />
                        <Track />
                        <Arrow aria-label="Scroll map right"><Tri dir="right" /></Arrow>
                      </HBar>
                    </HBarWrap>
                    <Corner />
                  </MapFoot>
                </MapPanel>
                <Side>
                  <GroupWrap>
                    <RadioGroup name={`${d.id}-convoys`} title="Convoys" items={["Mine", "Axis", "Allied", "1 Route"]} value="Mine" top={2} />
                  </GroupWrap>
                  <ShowUnused>
                    <CheckBox>
                      <Check type="checkbox" defaultChecked />
                      <svg width="9" height="9" viewBox="0 0 9 9">
                        <path d="M1 4L3.500 6.500L8 2" stroke="#000" strokeWidth="2" fill="none" />
                      </svg>
                    </CheckBox>
                    <span>Show Unused Convoys</span>
                  </ShowUnused>
                  <PushButton>Coastal Hexes</PushButton>
                </Side>
              </MapRow>
              <ButtonRow>
                <PushButton $w={130}><DoorIcon /><span><u>C</u>lose</span></PushButton>
                <ButtonGroup $gap={6}>
                  <PushButton $w={110}>Switch Map</PushButton>
                  <LinkCheck>
                    <Check type="checkbox" />
                    <span>Center linked map</span>
                  </LinkCheck>
                  <PushButton $w={110}>Trade Agreements</PushButton>
                </ButtonGroup>
                <ButtonGroup $gap={10}>
                  <PushButton $w={110}><BookIcon /><span>Form <u>H</u>elp</span></PushButton>
                  <PushButton $w={110}><BookIcon /><span><u>M</u>ap Help</span></PushButton>
                </ButtonGroup>
              </ButtonRow>
            </Right>
          </Lower>
        </Layer>
      </Content>
      <Rail $right>
        <Clamp $right />
        <RailFoot $right width="8" height="76" viewBox="0 0 8 76">
          <path d="M0 0L6 8V76H0z" fill="#5d5440" stroke="#000" />
          <path d="M0 8L7 20M0 12L7 24" stroke="#cfc6b6" strokeWidth="2" />
        </RailFoot>
      </Rail>
    </Frame>
    {d.last && (
      <BottomBar>
        <Chevrons width="120" height="15" viewBox="0 0 120 15">
          <path d="M24 4H50V11H24z" fill="#fff" />
          <path d="M34 12L42 3M54 12L62 3M104 12L112 3" stroke="#000" strokeWidth="6" />
          <path d="M34 12L42 3M54 12L62 3M104 12L112 3" stroke="#b9ae98" strokeWidth="4" />
          <circle cx="9" cy="7" r="7" fill="#9a9a92" stroke="#222" />
          <path d="M4 10L14 4" stroke="#333" strokeWidth="2" />
        </Chevrons>
        <Chevrons width="70" height="15" viewBox="0 0 70 15">
          <path d="M6 3L16 12M26 3L36 12" stroke="#000" strokeWidth="6" />
          <path d="M6 3L16 12M26 3L36 12" stroke="#b9ae98" strokeWidth="4" />
          <circle cx="60" cy="7" r="7" fill="#9a9a92" stroke="#222" />
          <path d="M55 10L65 4" stroke="#333" strokeWidth="2" />
        </Chevrons>
      </BottomBar>
    )}
  </Win>
);

const place = (type: string, where: string, action: string, dest: string) => [type, where, action, dest];
const res = (w: string) => place("Non-oil Res.", w, "Idle", "None");
const fac = (n: number, w: string) => place(`Factory (${n})`, w, `${n} Idle`, "-");

const PRE: Data = {
  id: "pre",
  banner: "Pre NM Production",
  factories: [["Controlled:", "19"], ["Damaged:", "0"], ["Idle:", "14"], ["Producing:", "5", true]],
  oil: [["Controlled:", "2"], ["Trade Rcvd:", "0"], ["Trade Sent:", "0"], ["No Path:", "0"], ["Convoyed:", "0"], ["Idle:", "0"], ["Lost to SB:", "0"], ["Damaged:", "0"], ["Production:", "0"], ["To Reorg. Units:", "4.2/4.75"]],
  nonOil: [["Controlled:", "12"], ["Trade Rcvd:", "0"], ["Trade Sent:", "0"], ["No Path:", "0"], ["Convoyed:", "0"], ["Idle:", "6"], ["Lost to EZOC:", "0"], ["Production:", "5"]],
  total: "5",
  points: [["Before Strat. Bomb.:", "5"], ["Food in Flames", "0"], ["Lost To Strat. Bomb.:", "0"], ["Net Production Points:", "5", true], ["Production Multiple:", "1.25", true]],
  saved: [["Saved at Start:", "1"], ["Controlled:", "3"], ["Production:", "0"]],
  build: [["Produced:", "6"], ["Trade Rcvd:", "0"], ["Trade Sent:", "0"], ["No Path (Lost):", "0"], ["Saved at Start:", "0"], ["Available:", "6", true]],
  convoys: [["Total on Map:", "4"], ["Total Unused:", "4"]],
  rows: [
    res("Haichow, China [77, 148]"), res("Chengtu, China [81, 131]"), res("Chungking, China [83, 133] #2"), res("China [86, 142]"),
    res("Formosa [89, 148]"), res("Hainan [96, 139]"), fac(1, "Seoul, Korea [72, 155]"), fac(2, "Tokyo, Japan [74, 168]"),
    fac(2, "Kyoto, Japan [75, 164]"), fac(2, "Nagoya, Japan [75, 165]"), fac(1, "Yokohama, Japan [75, 167]"), fac(2, "Hiroshima, Japan [76, 161]"),
  ],
  originX: 9,
};

const POST: Data = {
  ...PRE,
  id: "post",
  banner: "Post NM Production",
  factories: [["Controlled:", "19"], ["Damaged:", "0"], ["Idle:", "12"], ["Producing:", "7", true]],
  oil: [...PRE.oil.slice(0, 9), ["To Reorg. Units:", "4.3/4.95"]],
  nonOil: [["Controlled:", "12"], ["Trade Rcvd:", "0"], ["Trade Sent:", "0"], ["No Path:", "0"], ["Convoyed:", "2"], ["Idle:", "4"], ["Lost to EZOC:", "0"], ["Production:", "7"]],
  total: "7",
  points: [["Before Strat. Bomb.:", "7"], ["Food in Flames", "0"], ["Lost To Strat. Bomb.:", "0"], ["Net Production Points:", "7", true], ["Production Multiple:", "1.25", true]],
  build: [["Produced:", "9"], ["Trade Rcvd:", "0"], ["Trade Sent:", "0"], ["No Path (Lost):", "0"], ["Saved at Start:", "0"], ["Available:", "9", true]],
  convoys: [["Total on Map:", "4"], ["Total Unused:", "1"]],
  rows: [
    res("Chengtu, China [81, 131]"), res("Chungking, China [83, 133] #2"), res("China [86, 142]"), res("Formosa [89, 148]"),
    fac(2, "Tokyo, Japan [74, 168]"), fac(2, "Kyoto, Japan [75, 164]"), fac(2, "Nagoya, Japan [75, 165]"), fac(1, "Yokohama, Japan [75, 167]"),
    fac(2, "Hiroshima, Japan [76, 161]"), fac(1, "Kobe, Japan [76, 164]"), fac(2, "Osaka, Japan [77, 164]"),
  ],
  originX: -111,
  last: true,
};

export default function App() {
  return (
    <Page>
      <Global />
      <Screen d={PRE} />
      <Screen d={POST} />
    </Page>
  );
}
